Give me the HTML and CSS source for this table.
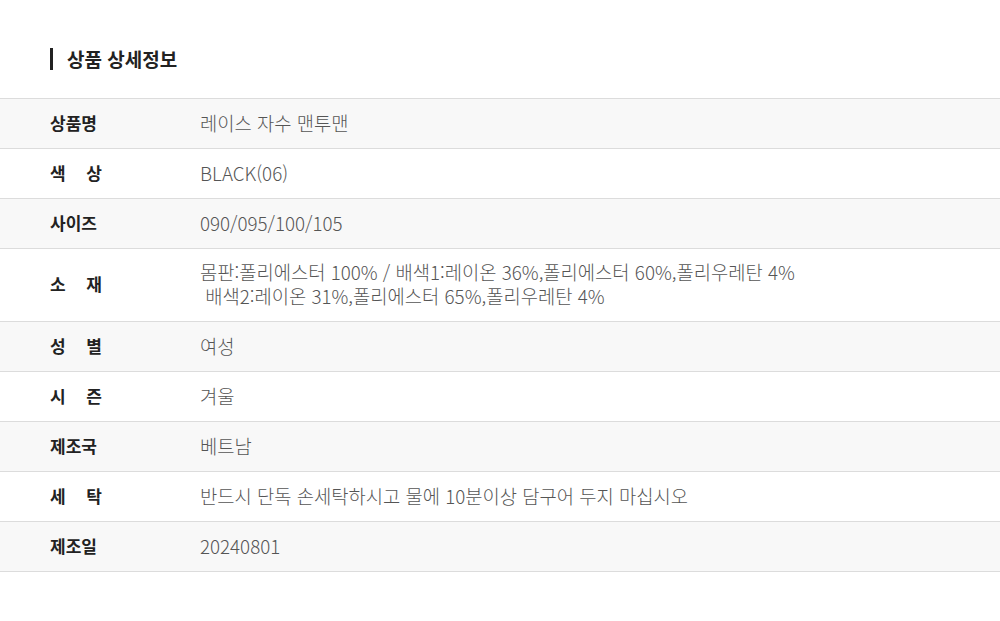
FILE: index.html
```html
<!DOCTYPE html>
<html lang="ko">
<head>
<meta charset="utf-8">
<link rel="stylesheet" href="styles.css">
</head>
<body>
<div class="page">
  <h2 class="title">상품 상세정보</h2>
  <div class="table">
    <div class="row"><div class="label">상품명</div><div class="value">레이스 자수 맨투맨</div></div>
    <div class="row"><div class="label spaced">색 상</div><div class="value">BLACK(06)</div></div>
    <div class="row"><div class="label">사이즈</div><div class="value">090/095/100/105</div></div>
    <div class="row"><div class="label spaced">소 재</div><div class="value">몸판:폴리에스터 100% / 배색1:레이온 36%,폴리에스터 60%,폴리우레탄 4%<br>&nbsp;배색2:레이온 31%,폴리에스터 65%,폴리우레탄 4%</div></div>
    <div class="row"><div class="label spaced">성 별</div><div class="value">여성</div></div>
    <div class="row"><div class="label spaced">시 즌</div><div class="value">겨울</div></div>
    <div class="row"><div class="label">제조국</div><div class="value">베트남</div></div>
    <div class="row"><div class="label spaced">세 탁</div><div class="value">반드시 단독 손세탁하시고 물에 10분이상 담구어 두지 마십시오</div></div>
    <div class="row"><div class="label">제조일</div><div class="value">20240801</div></div>
  </div>
</div>
</body>
</html>
```

FILE: styles.css
```css
html, body {
  margin: 0;
  padding: 0;
  background: #fff;
}
body {
  font-family: "Noto Sans CJK KR", "Noto Sans", sans-serif;
}
.page {
  padding-top: 48px;
}
.title {
  margin: 0 0 28px 50px;
  padding-left: 14px;
  border-left: 3px solid #222;
  font-size: 19px;
  font-weight: 700;
  color: #222;
  line-height: 20px;
  height: 22px;
  display: flex;
  align-items: center;
}
.table {
  border-top: 1px solid #dcdcdc;
}
.row {
  display: flex;
  align-items: center;
  min-height: 50px;
  box-sizing: border-box;
  padding: 11px 0 13px;
  border-bottom: 1px solid #dcdcdc;
  font-size: 17px;
  line-height: 24px;
}
.row:nth-child(odd) {
  background: #f8f8f8;
}
.label {
  width: 150px;
  padding-left: 50px;
  flex-shrink: 0;
  font-weight: 700;
  color: #222;
  box-sizing: content-box;
}
.label.spaced {
  width: 52px;
  margin-right: 98px;
  text-align: justify;
  text-align-last: justify;
}
.value {
  color: #555;
  font-weight: 300;
  font-size: 18.75px;
}
```
